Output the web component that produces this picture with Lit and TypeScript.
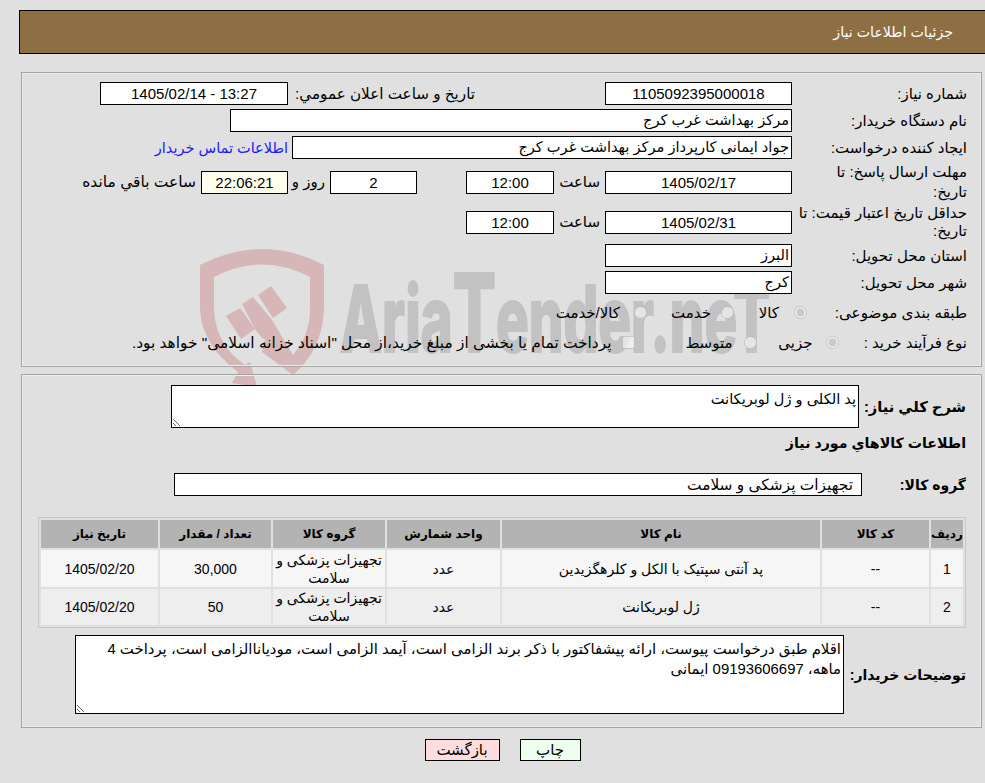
import { LitElement, html, css, svg } from "lit";
import { customElement } from "lit/decorators.js";

const watermark = svg`
  <path fill="#d6b6b6" fill-rule="evenodd" d="M200 265 Q262 233 324 265 L324 310 Q322 350 293 375 L262 352 L270 320 L293 355 Q310 335 310 310 L310 277 Q262 252 214 277 L214 310 Q216 345 245 365 L250 362 L257 387 L232 383 L238 372 Q202 345 200 310 Z"/>
  <path fill="#d6b6b6" d="M226 316 L240 308 L255 329 L241 339 Z M242 304 L253 297 L272 320 L293 355 L262 338 L255 329 Z M258 295 L271 286 L287 308 L273 318 Z"/>
  <text x="340" y="352" direction="ltr" fill="#c2c2c2" stroke="#c2c2c2" stroke-width="2" font-family="Inter, 'Liberation Sans', sans-serif" font-weight="800" font-size="92" textLength="430" lengthAdjust="spacingAndGlyphs">Aria<tspan font-size="108">T</tspan>ender.neT</text>
`;

@customElement("app-root")
export class AppRoot extends LitElement {
  static styles = css`
    :host {
      display: block;
      position: relative;
      height: 783px;
      overflow: hidden;
      background: #e0e0e0;
      color: #000;
      font: 15px/18px "Liberation Sans", "DejaVu Sans", sans-serif;
      direction: rtl;
    }
    .watermark { position: absolute; left: 0; top: 0; width: 985px; height: 783px; }
    .page { position: relative; padding-top: 10px; }
    .header {
      margin-left: 19px;
      height: 42px;
      background: #8e6e43;
      border: 1px solid #000;
      border-right: 0;
      color: #fff;
      display: flex;
      align-items: center;
      padding-right: 32px;
      font-size: 14.2px;
    }
    .panel {
      box-sizing: border-box;
      margin-right: 3px;
      width: 961px;
      border: 1px solid #a4a4a4;
      box-shadow: inset 0 0 0 1px #ececec;
    }
    .p1 { margin-top: 18px; padding: 9px 14px 0 0; height: 295px; }
    .p2 { margin-top: 7px; padding: 10px 15px 13px 0; }
    .row { display: flex; align-items: center; }
    .r { height: 23px; margin-bottom: 4px; }
    .r4 { height: 38px; margin-bottom: 2px; }
    .r6 { margin-top: 3px; }
    .r8 { height: 30px; }
    .lbl { box-sizing: border-box; width: 175px; padding-left: 8px; flex: none; line-height: 20px; }
    .lbl.wide { padding-left: 0; line-height: 18px; }
    .box {
      box-sizing: border-box;
      height: 23px;
      border: 1px solid #000;
      background: #fff;
      line-height: 21px;
      padding: 0 2px;
      flex: none;
      font-size: 14.6px;
    }
    .c { text-align: center; font-size: 15px; }
    .w187 { width: 187px; }
    .w88 { width: 88px; }
    .yellow { background: #ffffee; }
    .link { color: #1a1aff; margin-right: 4px; white-space: nowrap; font-size: 14.5px; }
    .mid { white-space: nowrap; box-sizing: border-box; flex: none; }
    .gap5 { padding-right: 5px; }
    .w187l { width: 187px; font-size: 15.2px; }
    .w130 { width: 130px; flex: none; }
    .w51 { width: 51px; }
    .w49 { width: 49px; flex: none; }
    .w87 { width: 87px; }
    .w42 { width: 42px; }
    .w188 { width: 188px; }
    .w562 { width: 562px; }
    .w500 { width: 500px; }
    .remain { font-size: 15.5px; }
    .radio { margin: 0 0 2px; flex: none; width: 13px; height: 13px; }
    .l160 { width: 160px; flex: none; font-size: 15.2px; }
    .l128 { width: 128.5px; flex: none; }
    .o1 { width: 60px; padding-right: 15px; }
    .o2 { width: 74px; padding-right: 10px; }
    .o3 { padding-right: 14px; }
    .o4 { width: 69px; padding-right: 13px; }
    .o5 { width: 109px; padding-right: 11px; }
    .o6 { padding-right: 10px; font-size: 15.4px; }
    .b { font-weight: 700; flex: none; font-size: 14px; }
    .b107 { width: 107px; font-size: 14.7px; }
    .b104 { width: 104px; }
    .b122 { width: 122px; }
    .title { height: 30px; line-height: 30px; font-weight: 700; font-size: 14.2px; }
    .grp { margin-top: 15px; }
    .grp .box { width: 688px; padding-right: 8px; font-size: 15.4px; }
    .notes { margin-top: 7px; }
    textarea {
      display: block;
      box-sizing: border-box;
      flex: none;
      margin: 0;
      border: 1px solid #000;
      background: #fff;
      font: inherit;
      line-height: 20px;
      padding: 3px 2px;
      outline: none;
      resize: both;
    }
    .t1 { width: 688px; height: 43px; font-size: 14.6px; }
    .t2 { width: 769px; height: 79px; font-size: 14.9px; }
    table {
      margin-top: 21px;
      width: 928px;
      table-layout: fixed;
      border-collapse: separate;
      border-spacing: 2px;
      border: 1px solid #c8c8c8;
      font-size: 14px;
      line-height: 18px;
    }
    th { background: #b3b3b3; height: 28px; padding: 0; font-weight: 700; font-size: 12px; }
    td { padding: 0 2px; text-align: center; }
    .odd td { background: #f6f6f6; height: 37px; }
    .even td { background: #eeeeee; height: 36px; }
    .c1 { width: 32px; } .c2 { width: 107px; } .c3 { width: 318px; } .c4 { width: 113px; }
    .c5 { width: 112px; } .c6 { width: 111px; } .c7 { width: 117px; }
    .buttons { display: flex; justify-content: center; gap: 20px; padding: 11px 0 0 20px; }
    button {
      box-sizing: border-box;
      height: 22px;
      border: 1px solid #000;
      padding: 0;
      font: inherit;
      color: #000;
    }
    .print { width: 61px; background: #eeffee; }
    .back { width: 75px; background: #ffdddd; }
  `;

  render() {
    const items = [
      ["1", "--", "پد آنتی سپتیک با الکل و کلرهگزیدین", "عدد", "تجهیزات پزشکی و سلامت", "30,000", "1405/02/20", "odd"],
      ["2", "--", "ژل لوبریکانت", "عدد", "تجهیزات پزشکی و سلامت", "50", "1405/02/20", "even"],
    ];
    return html`
      <svg class="watermark" viewBox="0 0 985 783" aria-hidden="true">${watermark}</svg>
      <div class="page">
        <div class="header">جزئیات اطلاعات نیاز</div>

        <div class="panel p1">
          <div class="row r">
            <div class="lbl">شماره نیاز:</div>
            <div class="box c w187">1105092395000018</div>
            <div class="w130"></div>
            <div class="mid w187l">تاریخ و ساعت اعلان عمومي:</div>
            <div class="box c w188">13:27 - 1405/02/14</div>
          </div>
          <div class="row r">
            <div class="lbl">نام دستگاه خریدار:</div>
            <div class="box w562">مرکز بهداشت غرب کرج</div>
          </div>
          <div class="row r">
            <div class="lbl">ایجاد کننده درخواست:</div>
            <div class="box w500">جواد ایمانی کارپرداز مرکز بهداشت غرب کرج</div>
            <div class="link">اطلاعات تماس خریدار</div>
          </div>
          <div class="row r4">
            <div class="lbl">مهلت ارسال پاسخ: تا تاریخ:</div>
            <div class="box c w187">1405/02/17</div>
            <div class="mid w51 gap5">ساعت</div>
            <div class="box c w88">12:00</div>
            <div class="w49"></div>
            <div class="box c w87">2</div>
            <div class="mid w42 gap5">روز و</div>
            <div class="box c yellow w87">22:06:21</div>
            <div class="mid gap5 remain">ساعت باقي مانده</div>
          </div>
          <div class="row r4">
            <div class="lbl wide">حداقل تاریخ اعتبار قیمت: تا تاریخ:</div>
            <div class="box c w187">1405/02/31</div>
            <div class="mid w51 gap5">ساعت</div>
            <div class="box c w88">12:00</div>
          </div>
          <div class="row r r6">
            <div class="lbl">استان محل تحویل:</div>
            <div class="box w187">البرز</div>
          </div>
          <div class="row r">
            <div class="lbl">شهر محل تحویل:</div>
            <div class="box w187">کرج</div>
          </div>
          <div class="row r8">
            <div class="l160">طبقه بندی موضوعی:</div>
            <input class="radio" type="radio" disabled checked />
            <div class="mid o1">کالا</div>
            <input class="radio" type="radio" disabled />
            <div class="mid o2">خدمت</div>
            <input class="radio" type="radio" disabled />
            <div class="mid o3">کالا/خدمت</div>
          </div>
          <div class="row r8">
            <div class="l128">نوع فرآیند خرید :</div>
            <input class="radio" type="radio" disabled checked />
            <div class="mid o4">جزیی</div>
            <input class="radio" type="radio" disabled />
            <div class="mid o5">متوسط</div>
            <input class="radio" type="checkbox" disabled />
            <div class="mid o6">پرداخت تمام یا بخشی از مبلغ خرید،از محل "اسناد خزانه اسلامی" خواهد بود.</div>
          </div>
        </div>

        <div class="panel p2">
          <div class="row">
            <div class="b b107">شرح کلي نياز:</div>
            <textarea class="t1" readonly>پد الکلی و ژل لوبریکانت</textarea>
          </div>
          <div class="title">اطلاعات کالاهاي مورد نياز</div>
          <div class="row grp">
            <div class="b b104">گروه کالا:</div>
            <div class="box">تجهیزات پزشکی و سلامت</div>
          </div>
          <table>
            <colgroup>
              <col class="c1" /><col class="c2" /><col class="c3" />
              <col class="c4" /><col class="c5" /><col class="c6" /><col class="c7" />
            </colgroup>
            <thead>
              <tr>
                <th>ردیف</th><th>کد کالا</th><th>نام کالا</th><th>واحد شمارش</th>
                <th>گروه کالا</th><th>تعداد / مقدار</th><th>تاریخ نیاز</th>
              </tr>
            </thead>
            <tbody>
              ${items.map(
                (r) => html`<tr class=${r[7]}>${r.slice(0, 7).map((c) => html`<td>${c}</td>`)}</tr>`
              )}
            </tbody>
          </table>
          <div class="row notes">
            <div class="b b122">توضیحات خریدار:</div>
            <textarea class="t2" readonly>اقلام طبق درخواست پیوست، ارائه پیشفاکتور با ذکر برند الزامی است، آیمد الزامی است، مودیاناالزامی است، پرداخت 4 ماهه، 09193606697 ایمانی</textarea>
          </div>
        </div>

        <div class="buttons">
          <button class="print">چاپ</button>
          <button class="back">بازگشت</button>
        </div>
      </div>
    `;
  }
}
